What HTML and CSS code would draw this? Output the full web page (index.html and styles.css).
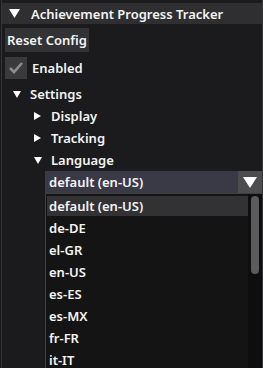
FILE: index.html
```html
<!DOCTYPE html>
<html lang="en">
<head>
    <meta charset="UTF-8">
    <title>Achievement Progress Tracker</title>
    <link rel="stylesheet" href="styles.css">
</head>
<body>
    <div class="window">
        <div class="titlebar">
            <svg class="arrow-big" width="11" height="9" viewBox="0 0 11 9"><polygon points="0,0 11,0 5.5,9" fill="#fff"/></svg>
            <span>Achievement Progress Tracker</span>
        </div>
        <div class="content">
            <button class="btn">Reset Config</button>
            <div class="row check-row">
                <span class="checkbox">
                    <svg width="22" height="22" viewBox="0 0 22 22"><polyline points="5,11 9,15 17,6" fill="none" stroke="#8c8c8e" stroke-width="2.6"/></svg>
                </span>
                <span>Enabled</span>
            </div>
            <div class="row tree lvl1">
                <svg class="tri" width="8" height="7" viewBox="0 0 8 7"><polygon points="0,0 8,0 4,7" fill="#fff"/></svg>
                <span>Settings</span>
            </div>
            <div class="row tree lvl2">
                <svg class="tri" width="8" height="8" viewBox="0 0 8 8"><polygon points="0,0 7,4 0,8" fill="#fff"/></svg>
                <span>Display</span>
            </div>
            <div class="row tree lvl2">
                <svg class="tri" width="8" height="8" viewBox="0 0 8 8"><polygon points="0,0 7,4 0,8" fill="#fff"/></svg>
                <span>Tracking</span>
            </div>
            <div class="row tree lvl2">
                <svg class="tri" width="8" height="7" viewBox="0 0 8 7"><polygon points="0,0 8,0 4,7" fill="#fff"/></svg>
                <span>Language</span>
            </div>
            <div class="combo">
                <span class="combo-value">default (en-US)</span>
                <span class="combo-arrow">
                    <svg width="14" height="11" viewBox="0 0 14 11"><polygon points="0,0 14,0 7,11" fill="#fff"/></svg>
                </span>
            </div>
            <div class="dropdown">
                <div class="items">
                    <div class="item selected">default (en-US)</div>
                    <div class="item">de-DE</div>
                    <div class="item">el-GR</div>
                    <div class="item">en-US</div>
                    <div class="item">es-ES</div>
                    <div class="item">es-MX</div>
                    <div class="item">fr-FR</div>
                    <div class="item">it-IT</div>
                </div>
                <div class="scrollbar">
                    <div class="grab"></div>
                </div>
            </div>
        </div>
    </div>
</body>
</html>
```
FILE: styles.css
```css
*{
    box-sizing: border-box;
}
body{
    margin: 0;
    background: #1b1b1d;
    font-family: "Noto Sans", sans-serif;
    font-weight: 600;
    font-size: 13px;
    color: #f4f4f4;
    height: 368px;
    overflow: hidden;
}
.window{
    margin-left: 1px;
    width: 262px;
    height: 368px;
    border-left: 1px solid #343436;
    border-right: 1px solid #343436;
    padding-top: 3px;
}
.titlebar{
    height: 21px;
    background: #2f2f31;
    display: flex;
    align-items: center;
    padding-left: 7px;
    gap: 11px;
}
.content{
    padding-left: 3px;
}
.btn{
    margin-top: 4px;
    height: 24px;
    padding: 0 2px;
    border: none;
    background: #333335;
    color: inherit;
    font: inherit;
    display: block;
}
.row{
    height: 22px;
    display: flex;
    align-items: center;
}
.check-row{
    margin-top: 5px;
    gap: 5px;
}
.checkbox{
    width: 22px;
    height: 22px;
    background: #3a3a3c;
    display: flex;
}
.tree{
    gap: 9px;
}
.lvl1{
    margin-top: 4px;
    padding-left: 8px;
}
.lvl2{
    padding-left: 29px;
}
.combo{
    margin-left: 40px;
    height: 22px;
    display: flex;
    background: #3a3a47;
}
.combo-value{
    flex: 1;
    padding-left: 4px;
    line-height: 22px;
}
.combo-arrow{
    width: 24px;
    background: #4c4c4e;
    display: flex;
    align-items: center;
    justify-content: center;
}
.dropdown{
    margin-left: 40px;
    height: 180px;
    display: flex;
    background: #141414;
    border: 1px solid #404042;
    border-right: none;
    padding-top: 2px;
}
.items{
    flex: 1;
    padding-left: 1px;
}
.item{
    height: 20px;
    margin-bottom: 2px;
    line-height: 20px;
    padding-left: 2px;
}
.selected{
    background: #323234;
}
.scrollbar{
    width: 14px;
    background: #0e0e0e;
    margin-top: -2px;
    padding: 2px 3px 0 3px;
}
.grab{
    height: 78px;
    background: #5b5b5d;
    border-radius: 4px;
}
```
